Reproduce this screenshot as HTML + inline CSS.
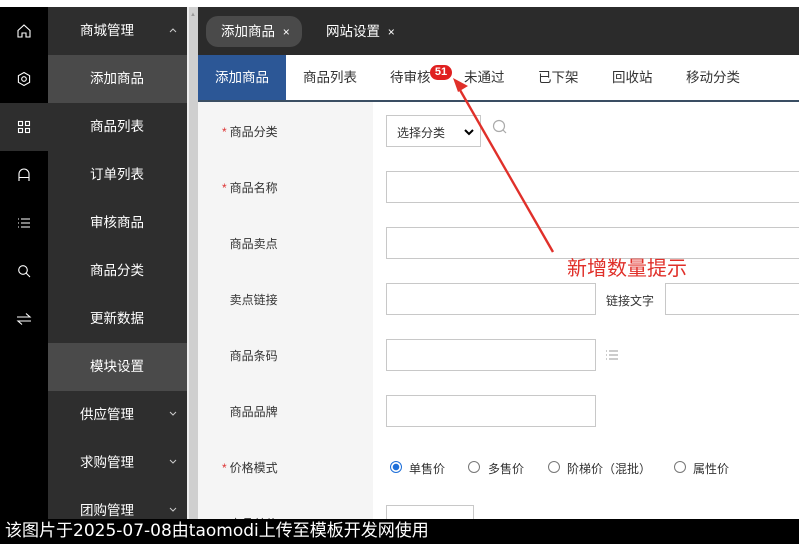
<!DOCTYPE html>
<html><head><meta charset="utf-8"><style>
*{margin:0;padding:0;box-sizing:border-box}
body{width:799px;height:544px;overflow:hidden;position:relative;background:#fff;font-family:"Liberation Sans","Noto Sans CJK SC",sans-serif;font-size:13px;color:#333}
.abs{position:absolute}
.icol{left:0;top:7px;width:48px;height:537px;background:#000}
.side{left:48px;top:7px;width:139px;height:537px;background:#2e2e2e}
.ico{position:absolute;left:0;width:48px;height:48px;display:flex;align-items:center;justify-content:center}
.si{position:absolute;left:48px;width:139px;height:48px;line-height:48px;color:#fff;font-size:13.5px;padding-left:42px}
.si.g{padding-left:32px}
.si.act{background:#4a4a4a}
.car{position:absolute;right:9px;top:19px}
.sb{left:187px;top:7px;width:11px;height:537px;background:#cfcfcf;border-left:2px solid #eee}
.top{left:198px;top:7px;width:601px;height:48px;background:#2b2b2b}
.tab{position:absolute;top:9px;height:31px;line-height:31px;color:#fff;font-size:13.5px}
.sub{left:198px;top:55px;width:601px;height:47px;background:#fff;border-bottom:2px solid #3a4e63}
.st{position:absolute;top:0;height:45px;line-height:45px;font-size:13.5px;color:#333}
.lab{left:198px;top:102px;width:175px;height:417px;background:#f5f5f5}
.lb{position:absolute;left:222px;font-size:12px;color:#333}
.lb b{color:#d33;font-weight:normal;margin-right:3px}
.in{position:absolute;border:1px solid #c8c8c8;background:#fff}
.rad{position:absolute;top:461px;width:12px;height:12px;border:1px solid #777;border-radius:50%}
.rt{position:absolute;top:460px;font-size:12px}
</style></head><body>
<div class="abs icol"></div>
<div class="abs" style="left:0;top:103px;width:48px;height:48px;background:#2e2e2e"></div>
<div class="abs side"></div>
<div class="ico" style="top:7px"><svg width="16" height="16" viewBox="0 0 16 16" fill="none" stroke="#fff" stroke-width="1.1"><path d="M2 7.5L8 2l6 5.5V14H10V10H6v4H2z"/></svg></div>
<div class="ico" style="top:55px"><svg width="16" height="16" viewBox="0 0 16 16" fill="none" stroke="#fff" stroke-width="1.1"><path d="M8 1.5l5.6 3.2v6.6L8 14.5l-5.6-3.2V4.7z"/><circle cx="8" cy="8" r="2.3"/></svg></div>
<div class="ico" style="top:103px"><svg width="14" height="14" viewBox="0 0 14 14" fill="none" stroke="#fff" stroke-width="1.1"><rect x="1.5" y="1.5" width="4" height="4"/><rect x="8.5" y="1.5" width="4" height="4"/><rect x="1.5" y="8.5" width="4" height="4"/><rect x="8.5" y="8.5" width="4" height="4"/></svg></div>
<div class="ico" style="top:151px"><svg width="16" height="16" viewBox="0 0 16 16" fill="none" stroke="#fff" stroke-width="1.1"><path d="M3 14V7a5 5 0 0 1 10 0v7M3 10.5h10"/></svg></div>
<div class="ico" style="top:199px"><svg width="14" height="14" viewBox="0 0 14 14" fill="none" stroke="#fff" stroke-width="1.1"><path d="M1 3h1M1 7h1M1 11h1M4 3h9M4 7h9M4 11h9"/></svg></div>
<div class="ico" style="top:247px"><svg width="14" height="14" viewBox="0 0 14 14" fill="none" stroke="#fff" stroke-width="1.1"><circle cx="6" cy="6" r="4.3"/><path d="M9 9l4 4"/></svg></div>
<div class="ico" style="top:295px"><svg width="16" height="14" viewBox="0 0 16 14" fill="none" stroke="#fff" stroke-width="1.1"><path d="M1 5h13L10 1.5M15 9H2l4 3.5"/></svg></div>
<div class="si g" style="top:7px">商城管理<svg class="car" width="10" height="8" viewBox="0 0 10 8" fill="none" stroke="#ccc"><path d="M2 6l3-3 3 3"/></svg></div>
<div class="si act" style="top:55px">添加商品</div>
<div class="si" style="top:103px">商品列表</div>
<div class="si" style="top:151px">订单列表</div>
<div class="si" style="top:199px">审核商品</div>
<div class="si" style="top:247px">商品分类</div>
<div class="si" style="top:295px">更新数据</div>
<div class="si act" style="top:343px">模块设置</div>
<div class="si g" style="top:391px">供应管理<svg class="car" width="10" height="8" viewBox="0 0 10 8" fill="none" stroke="#ccc"><path d="M2 2l3 3 3-3"/></svg></div>
<div class="si g" style="top:439px">求购管理<svg class="car" width="10" height="8" viewBox="0 0 10 8" fill="none" stroke="#ccc"><path d="M2 2l3 3 3-3"/></svg></div>
<div class="si g" style="top:487px">团购管理<svg class="car" width="10" height="8" viewBox="0 0 10 8" fill="none" stroke="#ccc"><path d="M2 2l3 3 3-3"/></svg></div>
<div class="abs sb"></div>
<div class="abs" style="left:190px;top:12px;width:6px;height:5px;color:#999;font-size:6px">▲</div>
<div class="abs top">
 <div class="tab" style="left:8px;width:96px;background:#4a4a4a;border-radius:12px;padding-left:15px">添加商品 <span style="font-size:12px;margin-left:4px">×</span></div>
 <div class="tab" style="left:128px">网站设置 <span style="font-size:12px;margin-left:4px">×</span></div>
</div>
<div class="abs sub">
 <div class="st" style="left:0;width:88px;background:#2c5796;color:#fff;text-align:center">添加商品</div>
 <div class="st" style="left:105px">商品列表</div>
 <div class="st" style="left:192px">待审核</div>
 <div class="abs" style="left:232px;top:10px;width:22px;height:15px;background:#e02020;border-radius:8px;color:#fff;font-size:11px;line-height:15px;text-align:center;font-weight:bold">51</div>
 <div class="st" style="left:266px">未通过</div>
 <div class="st" style="left:340px">已下架</div>
 <div class="st" style="left:414px">回收站</div>
 <div class="st" style="left:488px">移动分类</div>
</div>
<div class="abs lab"></div>
<div class="lb" style="top:123px"><b>*</b>商品分类</div>
<div class="lb" style="top:179px"><b>*</b>商品名称</div>
<div class="lb" style="top:235px"><b style="color:transparent">*</b>商品卖点</div>
<div class="lb" style="top:291px"><b style="color:transparent">*</b>卖点链接</div>
<div class="lb" style="top:347px"><b style="color:transparent">*</b>商品条码</div>
<div class="lb" style="top:403px"><b style="color:transparent">*</b>商品品牌</div>
<div class="lb" style="top:459px"><b>*</b>价格模式</div>
<div class="lb" style="top:515px"><b>*</b>商品单价</div>
<div class="in" style="left:386px;top:115px;width:95px;height:32px;font-size:12px;padding:8px 0 0 10px">选择分类<svg style="position:absolute;right:6px;top:13px" width="10" height="7" viewBox="0 0 10 7" fill="none" stroke="#000" stroke-width="2"><path d="M1 1l4 4 4-4"/></svg></div>
<svg class="abs" style="left:492px;top:119px" width="16" height="16" viewBox="0 0 16 16" fill="none" stroke="#aaa" stroke-width="1.2"><circle cx="7" cy="7" r="5.5"/><path d="M11 11l3 3"/></svg>
<div class="in" style="left:386px;top:171px;width:420px;height:32px"></div>
<div class="in" style="left:386px;top:227px;width:420px;height:32px"></div>
<div class="in" style="left:386px;top:283px;width:210px;height:32px"></div>
<div class="abs" style="left:606px;top:292px;font-size:12px">链接文字</div>
<div class="in" style="left:665px;top:283px;width:140px;height:32px"></div>
<div class="in" style="left:386px;top:339px;width:210px;height:32px"></div>
<svg class="abs" style="left:605px;top:348px" width="14" height="14" viewBox="0 0 14 14" fill="none" stroke="#999" stroke-width="1"><path d="M1 3h1M1 7h1M1 11h1M4 3h9M4 7h9M4 11h9"/></svg>
<div class="in" style="left:386px;top:395px;width:210px;height:32px"></div>
<div class="rad" style="left:390px;border-color:#1e6fd9;background:radial-gradient(circle,#1e6fd9 3px,#fff 3.5px)"></div>
<div class="rt" style="left:409px">单售价</div>
<div class="rad" style="left:468px"></div><div class="rt" style="left:488px">多售价</div>
<div class="rad" style="left:548px"></div><div class="rt" style="left:567px">阶梯价（混批）</div>
<div class="rad" style="left:674px"></div><div class="rt" style="left:693px">属性价</div>
<div class="in" style="left:386px;top:505px;width:88px;height:32px"></div>
<svg class="abs" style="left:0;top:0" width="799" height="544"><path d="M553 252L460 90" stroke="#e0302a" stroke-width="2.4"/><path d="M453 78l15 8-10 6z" fill="#e0302a"/></svg>
<div class="abs" style="left:567px;top:252px;font-size:20px;color:#e0302a">新增数量提示</div>
<div class="abs" style="left:0;top:519px;width:799px;height:25px;background:#000;color:#fff;font-size:17px;line-height:25px;padding-left:5px;font-family:'DejaVu Sans','Noto Sans CJK SC',sans-serif">该图片于2025-07-08由taomodi上传至模板开发网使用</div>
<div class="abs" style="left:0;top:0;width:799px;height:7px;background:#fff"></div>
</body></html>
